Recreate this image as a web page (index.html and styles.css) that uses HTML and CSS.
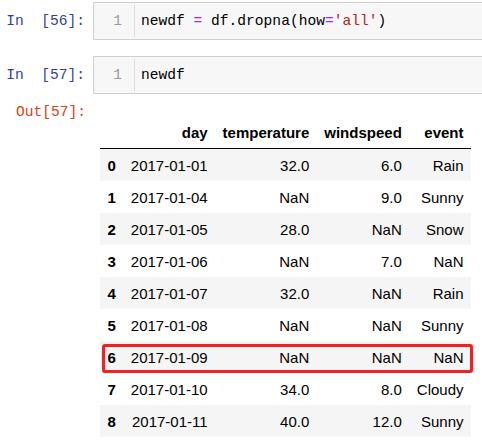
FILE: index.html
```html
<!DOCTYPE html>
<html>
<head>
<meta charset="utf-8">
<link rel="stylesheet" href="styles.css">
</head>
<body>
<div class="notebook">
  <div class="cell">
    <div class="prompt prompt-in">In&nbsp;&nbsp;[56]:</div>
    <div class="input-area">
      <div class="gutter">1</div>
      <div class="code">newdf <span class="op">=</span> df.dropna(how<span class="op">=</span><span class="str">'all'</span>)</div>
    </div>
  </div>
  <div class="cell cell-second">
    <div class="prompt prompt-in">In&nbsp;&nbsp;[57]:</div>
    <div class="input-area">
      <div class="gutter">1</div>
      <div class="code">newdf</div>
    </div>
  </div>
  <div class="cell cell-output">
    <div class="prompt prompt-out">Out[57]:</div>
    <div class="output-area">
      <div class="table-wrap">
        <table class="dataframe">
          <thead>
            <tr><th></th><th>day</th><th>temperature</th><th>windspeed</th><th>event</th></tr>
          </thead>
          <tbody>
            <tr><th>0</th><td>2017-01-01</td><td>32.0</td><td>6.0</td><td>Rain</td></tr>
            <tr><th>1</th><td>2017-01-04</td><td>NaN</td><td>9.0</td><td>Sunny</td></tr>
            <tr><th>2</th><td>2017-01-05</td><td>28.0</td><td>NaN</td><td>Snow</td></tr>
            <tr><th>3</th><td>2017-01-06</td><td>NaN</td><td>7.0</td><td>NaN</td></tr>
            <tr><th>4</th><td>2017-01-07</td><td>32.0</td><td>NaN</td><td>Rain</td></tr>
            <tr><th>5</th><td>2017-01-08</td><td>NaN</td><td>NaN</td><td>Sunny</td></tr>
            <tr><th>6</th><td>2017-01-09</td><td>NaN</td><td>NaN</td><td>NaN</td></tr>
            <tr><th>7</th><td>2017-01-10</td><td>34.0</td><td>8.0</td><td>Cloudy</td></tr>
            <tr><th>8</th><td>2017-01-11</td><td>40.0</td><td>12.0</td><td>Sunny</td></tr>
          </tbody>
        </table>
        <div class="highlight"></div>
      </div>
    </div>
  </div>
</div>
</body>
</html>
```
FILE: styles.css
```css
html, body {
  margin: 0;
  padding: 0;
  background: #ffffff;
}

.notebook {
  padding-top: 2px;
  overflow: hidden;
  width: 482px;
}

.cell {
  display: flex;
  align-items: stretch;
}

.cell-second {
  margin-top: 16px;
}

.cell-output {
  margin-top: 9px;
}

.prompt {
  width: 85px;
  flex: none;
  text-align: right;
  font-family: "Liberation Mono", monospace;
  font-size: 14.6px;
  white-space: nowrap;
}

.prompt-in {
  color: #303f9f;
  line-height: 38px;
}

.prompt-out {
  color: #d84315;
  line-height: 18px;
  margin-left: 1px;
}

.input-area {
  flex: 1;
  margin-left: 8px;
  height: 38px;
  box-sizing: border-box;
  border: 1px solid #cfcfcf;
  border-right: 0;
  border-radius: 2px 0 0 2px;
  background: #f7f7f7;
  display: flex;
  align-items: stretch;
}

.gutter {
  width: 41px;
  flex: none;
  box-sizing: border-box;
  margin: 2px 0;
  border-right: 1px solid #dddddd;
  text-align: right;
  padding-right: 12px;
  font-family: "Liberation Mono", monospace;
  font-size: 14.6px;
  line-height: 32px;
  color: #999999;
}

.code {
  padding-left: 6px;
  font-family: "Liberation Mono", monospace;
  font-size: 14.6px;
  line-height: 36px;
  color: #000000;
  white-space: pre;
}

.op {
  color: #aa22ff;
}

.str {
  color: #ba2121;
}

.output-area {
  flex: 1;
  padding-left: 14px;
  padding-top: 13px;
}

.table-wrap {
  position: relative;
  display: inline-block;
}

.dataframe {
  border-collapse: collapse;
  border-spacing: 0;
  font-family: "Liberation Sans", Arial, sans-serif;
  font-size: 15px;
  color: #000000;
}

.dataframe th,
.dataframe td {
  padding: 7.5px;
  line-height: 17px;
  text-align: right;
  white-space: nowrap;
  vertical-align: middle;
}

.dataframe th {
  font-weight: bold;
}

.dataframe thead th {
  vertical-align: bottom;
  border-bottom: 1px solid #000000;
}

.dataframe tbody th {
  text-align: left;
}

.dataframe tbody tr:nth-child(odd) {
  background: #f5f5f5;
}

.highlight {
  position: absolute;
  left: 1.5px;
  top: 228px;
  width: 371px;
  height: 29px;
  box-sizing: border-box;
  border: 3px solid #f41f1f;
  border-radius: 3px;
}
```
